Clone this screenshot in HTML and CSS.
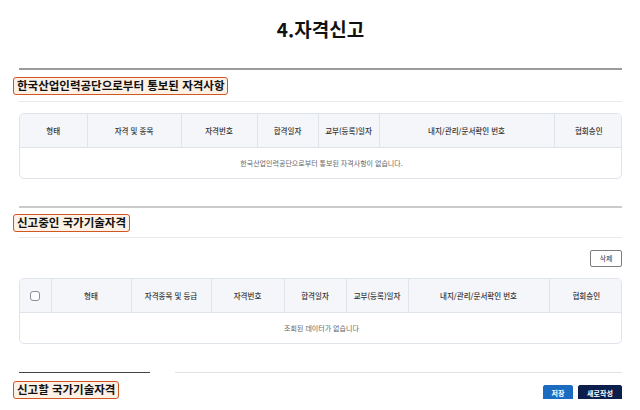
FILE: index.html
```html
<!DOCTYPE html>
<html lang="ko">
<head>
<meta charset="utf-8">
<link rel="stylesheet" href="styles.css">
</head>
<body>
<div class="page">
  <h1 class="title">4.자격신고</h1>

  <div class="sec-head sec-head--dark">
    <span class="badge">한국산업인력공단으로부터 통보된 자격사항</span>
  </div>
  <div class="grid-wrap grid-wrap--first">
    <table class="grid">
      <colgroup>
        <col class="c67"><col class="c94"><col class="c76"><col class="c61"><col class="c61"><col class="c175"><col class="c69">
      </colgroup>
      <thead>
        <tr><th>형태</th><th>자격 및 종목</th><th>자격번호</th><th>합격일자</th><th>교부(등록)일자</th><th>내지/관리/문서확인 번호</th><th>협회승인</th></tr>
      </thead>
      <tbody>
        <tr><td colspan="7" class="empty">한국산업인력공단으로부터 통보된 자격사항이 없습니다.</td></tr>
      </tbody>
    </table>
  </div>

  <div class="sec-head sec-head--light">
    <span class="badge">신고중인 국가기술자격</span>
  </div>
  <div class="btn-row">
    <button class="btn btn--line">삭제</button>
  </div>
  <div class="grid-wrap">
    <table class="grid">
      <colgroup>
        <col class="c31"><col class="c80"><col class="c80"><col class="c73"><col class="c62"><col class="c62"><col class="c141"><col class="c74">
      </colgroup>
      <thead>
        <tr><th><span class="chk"></span></th><th>형태</th><th>자격종목 및 등급</th><th>자격번호</th><th>합격일자</th><th>교부(등록)일자</th><th>내지/관리/문서확인 번호</th><th>협회승인</th></tr>
      </thead>
      <tbody>
        <tr><td colspan="8" class="empty">조회된 데이터가 없습니다</td></tr>
      </tbody>
    </table>
  </div>

  <div class="split-line">
    <span class="split-line__dark"></span>
    <span class="split-line__light"></span>
  </div>
  <div class="last-head">
    <span class="badge">신고할 국가기술자격</span>
    <div class="btns">
      <button class="btn btn--blue">저장</button>
      <button class="btn btn--navy">새로작성</button>
    </div>
  </div>
</div>
</body>
</html>
```

FILE: styles.css
```css
* { box-sizing: border-box; }
html, body { margin: 0; padding: 0; background: #fff; }
body {
  font-family: "Noto Sans CJK KR", "Noto Sans", "Liberation Sans", sans-serif;
  color: #111;
}
.page {
  width: 640px;
  padding: 0 18px 0 19px;
}
.title {
  margin: 0;
  padding-top: 17px;
  height: 68px;
  font-size: 19px;
  line-height: 24px;
  font-weight: 700;
  text-align: center;
  color: #111;
}
.sec-head {
  display: flex;
  align-items: center;
  padding: 7px 0 6px;
  border-bottom: 1px solid #e8e8e8;
}
.sec-head--dark { border-top: 2px solid #9b9b9b; }
.sec-head--light {
  border-top: 2px solid #cbcbcb;
  margin-top: 27px;
  padding: 6px 0 5px;
}
.badge {
  display: block;
  margin-left: -6px;
  padding: 0 3px;
  height: 18px;
  border: 1.5px solid #d2561f;
  border-radius: 3px;
  background: #fdf1e6;
  font-size: 11.5px;
  line-height: 15px;
  font-weight: 700;
  color: #111;
  white-space: nowrap;
}
.grid-wrap {
  margin-top: 11px;
  border: 1px solid #dfe3ea;
  border-radius: 5px;
  overflow: hidden;
}
.grid {
  width: 100%;
  border-collapse: collapse;
  table-layout: fixed;
}
.grid th {
  height: 33px;
  padding: 0;
  background: #f4f6fa;
  border-bottom: 1px solid #dfe3ea;
  border-left: 1px solid #dfe3ea;
  font-size: 7.5px;
  font-weight: 500;
  color: #333;
  text-align: center;
  white-space: nowrap;
}
.grid th:first-child { border-left: 0; }
.grid td.empty {
  height: 31px;
  padding: 0;
  font-size: 7px;
  color: #666;
  text-align: center;
}
.c31 { width: 31px; } .c61 { width: 61px; } .c62 { width: 62px; }
.c67 { width: 67px; } .c69 { width: 69px; } .c73 { width: 73px; }
.c74 { width: 74px; } .c76 { width: 76px; } .c80 { width: 80px; }
.c94 { width: 94px; } .c141 { width: 141px; } .c175 { width: 175px; }
.chk {
  display: inline-block;
  width: 10px;
  height: 10px;
  border: 1px solid #8a8f98;
  border-radius: 3px;
  background: #fff;
  vertical-align: middle;
}
.btn-row {
  display: flex;
  justify-content: flex-end;
  margin-top: 12px;
}
.btn {
  font-family: inherit;
  height: 17px;
  padding: 0 4px;
  font-size: 7px;
  font-weight: 700;
  border-radius: 2px;
  line-height: 15px;
  cursor: pointer;
}
.btn--line {
  width: 32px;
  background: #fff;
  border: 1px solid #7d7d7d;
  color: #333;
  font-weight: 400;
}
.btn--blue {
  width: 30px;
  background: #1b6cc1;
  border: 1px solid #1b6cc1;
  color: #fff;
}
.btn--navy {
  width: 44px;
  background: #0c1f4c;
  border: 1px solid #0c1f4c;
  color: #fff;
}
.split-line {
  display: flex;
  gap: 25px;
  margin-top: 28px;
  height: 1px;
}
.split-line__dark { width: 131px; height: 1px; background: #444; }
.split-line__light { flex: 1; height: 1px; background: #e2e2e2; }
.last-head {
  display: flex;
  justify-content: space-between;
  align-items: flex-end;
  margin-top: 8px;
}
.btns {
  display: flex;
  gap: 5px;
  margin-bottom: -3px;
}
```
